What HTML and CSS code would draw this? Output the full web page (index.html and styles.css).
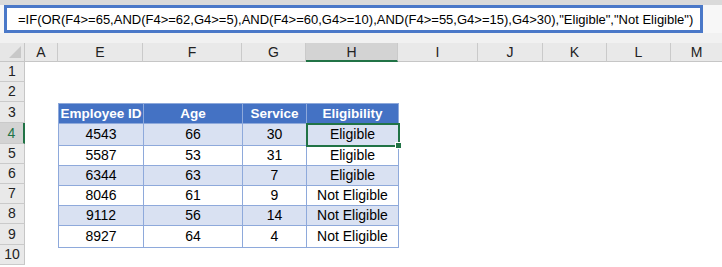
FILE: index.html
```html
<!DOCTYPE html>
<html>
<head>
    <title>Eligibility Check</title>
    <link rel="stylesheet" href="styles.css">
</head>
<body>
    <!-- Formula bar -->
    <div class="top-strip"></div>
    <div class="formula-bar">
        <div class="formula-box">=IF(OR(F4&gt;=65,AND(F4&gt;=62,G4&gt;=5),AND(F4&gt;=60,G4&gt;=10),AND(F4&gt;=55,G4&gt;=15),G4&gt;30),"Eligible","Not Eligible")</div>
    </div>
    <div class="bar-gap"></div>

    <!-- Sheet grid -->
    <div class="sheet">
        <div class="corner"><span class="corner-tri"></span></div>
        <div class="col-head">A</div>
        <div class="col-head">E</div>
        <div class="col-head">F</div>
        <div class="col-head">G</div>
        <div class="col-head active">H</div>
        <div class="col-head">I</div>
        <div class="col-head">J</div>
        <div class="col-head">K</div>
        <div class="col-head">L</div>
        <div class="col-head last">M</div>

        <div class="row-heads">
            <div class="row-head">1</div>
            <div class="row-head">2</div>
            <div class="row-head tall">3</div>
            <div class="row-head tall active">4</div>
            <div class="row-head">5</div>
            <div class="row-head">6</div>
            <div class="row-head">7</div>
            <div class="row-head">8</div>
            <div class="row-head tall">9</div>
            <div class="row-head">10</div>
        </div>

        <div class="cells">
            <table class="data">
                <thead>
                    <tr>
                        <th class="c-e">Employee ID</th>
                        <th class="c-f">Age</th>
                        <th class="c-g">Service</th>
                        <th class="c-h">Eligibility</th>
                    </tr>
                </thead>
                <tbody>
                    <tr class="tall"><td>4543</td><td>66</td><td>30</td><td class="selected">Eligible<span class="handle"></span></td></tr>
                    <tr><td>5587</td><td>53</td><td>31</td><td>Eligible</td></tr>
                    <tr><td>6344</td><td>63</td><td>7</td><td>Eligible</td></tr>
                    <tr><td>8046</td><td>61</td><td>9</td><td>Not Eligible</td></tr>
                    <tr><td>9112</td><td>56</td><td>14</td><td>Not Eligible</td></tr>
                    <tr class="tall"><td>8927</td><td>64</td><td>4</td><td>Not Eligible</td></tr>
                </tbody>
            </table>
        </div>
    </div>
</body>
</html>
```

FILE: styles.css
```css
body {
    margin: 0;
    background-color: #ffffff;
    font-family: "Liberation Sans", Arial, sans-serif;
    width: 722px;
    height: 267px;
    overflow: hidden;
}

/* Formula bar */
.top-strip {
    height: 5px;
    background-color: #dadada;
}

.formula-bar {
    padding: 0 19px 0 4px;
    background-color: #f7f7f7;
}

.formula-box {
    height: 22px;
    border: 3px solid #4a78c8;
    background-color: white;
    padding-left: 11px;
    font-size: 13px;
    line-height: 23px;
    color: #000;
    white-space: nowrap;
    overflow: hidden;
}

.bar-gap {
    height: 10px;
    background-color: #f1f1f1;
}

/* Sheet layout */
.sheet {
    display: grid;
    grid-template-columns: 25px 33px 85px 99px 64px 92px 80px 65px 64px 64px 51px;
    grid-template-rows: 19px 203px;
}

.corner {
    background-color: #e6e6e6;
    border-right: 1px solid #c6c6c6;
    border-bottom: 1px solid #c6c6c6;
    position: relative;
}

/* select-all triangle */
.corner-tri {
    position: absolute;
    right: 3px;
    bottom: 3px;
    width: 0;
    height: 0;
    border-left: 12px solid transparent;
    border-bottom: 12px solid #c8c8c8;
}

.col-head {
    background-color: #e9e9e9;
    border-right: 1px solid #cacaca;
    border-bottom: 1px solid #c6c6c6;
    font-size: 14px;
    line-height: 19px;
    text-align: center;
    color: #222;
}

.col-head.last {
    border-right: none;
}

.col-head.active {
    background-color: #d3d3d3;
    border-bottom: 2px solid #217346;
    line-height: 18px;
}

.row-heads {
    display: flex;
    flex-direction: column;
}

.row-head {
    background-color: #e9e9e9;
    border-right: 1px solid #c6c6c6;
    border-bottom: 1px solid #cacaca;
    font-size: 14px;
    text-align: center;
    color: #222;
    height: 19px;
    line-height: 19px;
}

.row-head.tall {
    height: 20px;
    line-height: 21px;
}

.row-head.active {
    background-color: #d3d3d3;
    border-right: 2px solid #217346;
    color: #217346;
}

/* Cell area holding the table */
.cells {
    grid-column: 2 / 12;
    padding-top: 41px;
    padding-left: 33px;
}

table.data {
    border-collapse: collapse;
    table-layout: fixed;
    font-size: 14px;
}

th, td {
    border: 1px solid #8ea9db;
    text-align: center;
    padding: 0;
    height: 19px;
    line-height: 19px;
}

th {
    background-color: #4472c4;
    color: white;
    font-weight: bold;
    font-size: 13.5px;
}

.c-e { width: 84px; }
.c-f { width: 98px; }
.c-g { width: 63px; }
.c-h { width: 91px; }

tbody tr:nth-child(odd) td {
    background-color: #d9e1f2;
}

tbody tr.tall td {
    height: 20px;
    line-height: 21px;
}

td.selected {
    position: relative;
    outline: 2px solid #217346;
    outline-offset: -1px;
}

/* fill handle */
.handle {
    position: absolute;
    right: -4px;
    bottom: -4px;
    width: 5px;
    height: 5px;
    background-color: #217346;
    border: 1px solid white;
}
```
